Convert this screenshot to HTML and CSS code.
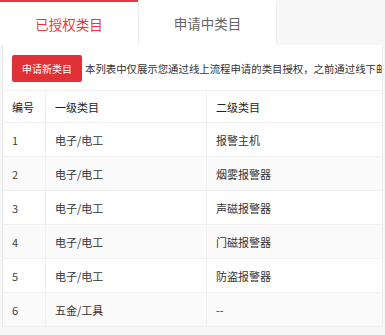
FILE: index.html
```html
<!DOCTYPE html>
<html lang="zh-CN">

<head>
    <meta charset="UTF-8">
    <meta name="viewport" content="width=device-width, initial-scale=1.0">
    <title>类目授权</title>
    <link rel="stylesheet" href="styles.css">
</head>

<body>
    <div class="tab-container">
        <div class="tab active">已授权类目</div>
        <div class="tab">申请中类目</div>
        <div class="tab-rest"></div>
    </div>

    <div class="panel">
        <div class="toolbar">
            <button class="apply-btn">申请新类目</button>
            <span class="tip">本列表中仅展示您通过线上流程申请的类目授权，之前通过线下邮箱申请的类目授权请联系客服查询</span>
        </div>

        <table class="cat-table">
            <thead>
                <tr>
                    <th class="col-no">编号</th>
                    <th class="col-first">一级类目</th>
                    <th>二级类目</th>
                </tr>
            </thead>
            <tbody>
                <tr><td>1</td><td>电子/电工</td><td>报警主机</td></tr>
                <tr><td>2</td><td>电子/电工</td><td>烟雾报警器</td></tr>
                <tr><td>3</td><td>电子/电工</td><td>声磁报警器</td></tr>
                <tr><td>4</td><td>电子/电工</td><td>门磁报警器</td></tr>
                <tr><td>5</td><td>电子/电工</td><td>防盗报警器</td></tr>
                <tr><td>6</td><td>五金/工具</td><td>--</td></tr>
            </tbody>
        </table>
    </div>
</body>

</html>
```

FILE: styles.css
```css
body {
    margin: 0;
    font-family: "Microsoft YaHei", "Noto Sans CJK SC", sans-serif;
    background-color: #f7f7f7;
    color: #333;
    width: 385px;
    height: 335px;
    overflow: hidden;
}

.tab-container {
    display: flex;
    height: 45px;
}

.tab {
    width: 138px;
    flex-shrink: 0;
    display: flex;
    align-items: center;
    justify-content: center;
    background-color: white;
    font-size: 13.5px;
    color: #666;
    box-sizing: border-box;
}

.tab + .tab {
    border-left: 1px solid #eee;
}

.tab.active {
    color: #e4393c;
    border-top: 2px solid #e4393c;
}

.tab-rest {
    flex: 1;
    margin-top: 2px;
    border-left: 1px solid #eee;
    background-color: #f7f7f7;
}

.panel {
    margin-left: 2px;
    width: 381px;
    background-color: white;
    border-left: 1px solid #e8e8e8;
    border-right: 1px solid #eee;
    padding-top: 10px;
    box-sizing: border-box;
}

.toolbar {
    display: flex;
    align-items: center;
    padding-left: 9px;
    white-space: nowrap;
    overflow: hidden;
    height: 27px;
    margin-bottom: 8px;
}

.apply-btn {
    flex-shrink: 0;
    height: 27px;
    width: 70px;
    padding: 0;
    background-color: #e03236;
    color: white;
    border: none;
    border-radius: 2px;
    font-family: inherit;
    font-size: 10px;
    margin-right: 3px;
}

.tip {
    font-size: 10.4px;
    color: #333;
}

.cat-table {
    width: 100%;
    border-collapse: collapse;
    font-size: 11px;
    color: #333;
}

.cat-table th,
.cat-table td {
    text-align: left;
    height: 33px;
    padding: 0 0 0 9px;
    border-top: 1px solid #f0f0f0;
    border-bottom: 1px solid #f0f0f0;
    font-weight: normal;
}

.cat-table th {
    color: #222;
    height: 31px;
}

.cat-table th + th,
.cat-table td + td {
    border-left: 1px solid #f0f0f0;
}

.col-no {
    width: 33px;
}

.col-first {
    width: 151px;
}

.cat-table tbody tr:nth-child(even) {
    background-color: #fafafa;
}

.cat-table td:first-child {
    color: #444;
}
```
